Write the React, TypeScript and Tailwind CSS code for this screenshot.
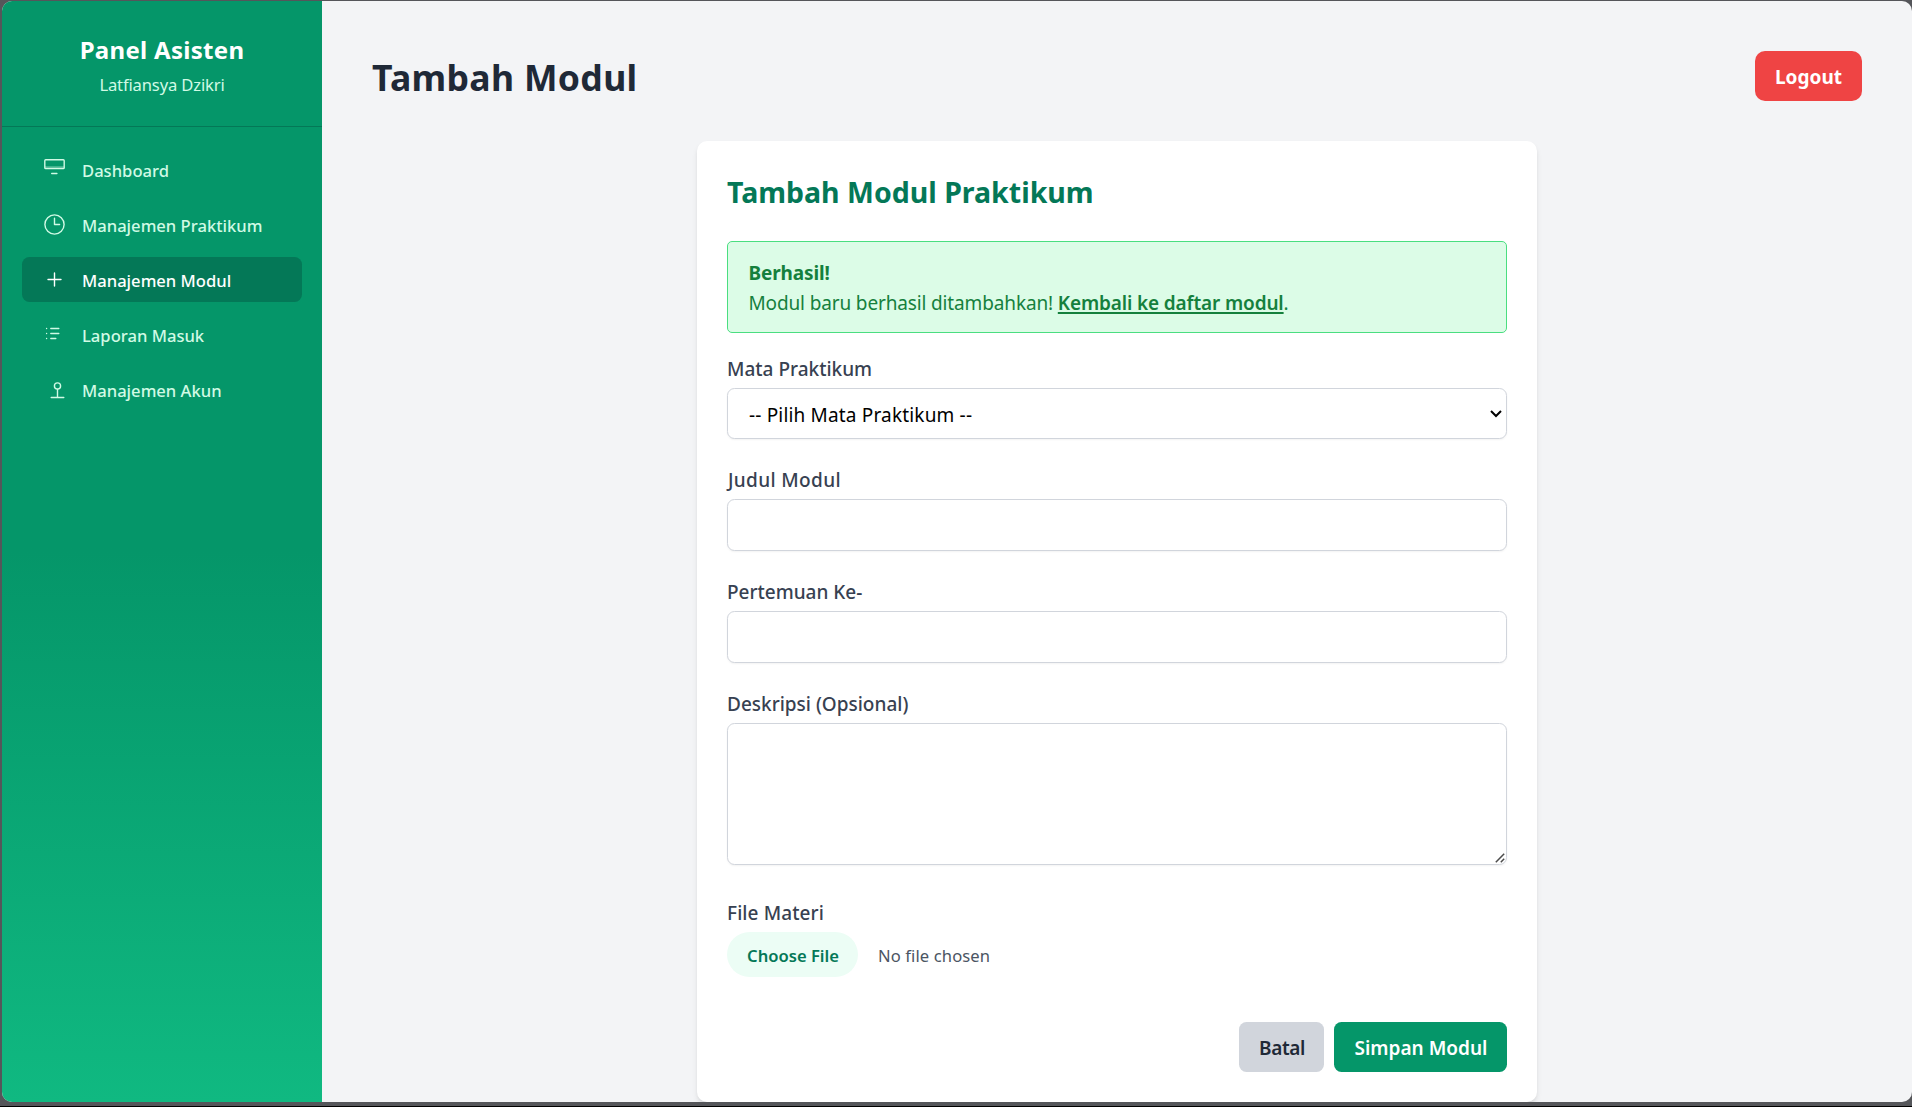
import React from "react";

type NavItem = { label: string; icon: React.ReactNode; active?: boolean };

const Icon = ({ children }: { children: React.ReactNode }) => (
  <svg
    viewBox="0 0 25 25"
    className="mr-[15px] size-[25px] shrink-0"
    fill="none"
    stroke="currentColor"
    strokeWidth={1.4}
    strokeLinecap="round"
    strokeLinejoin="round"
  >
    {children}
  </svg>
);

const nav: NavItem[] = [
  {
    label: "Dashboard",
    icon: (
      <Icon>
        <rect x="2.8" y="2.8" width="19.4" height="8.8" rx="0.9" />
        <path d="M3.2 10.1h18.6" strokeOpacity={0.6} />
        <path d="M9.7 16.5h5.2" />
      </Icon>
    ),
  },
  {
    label: "Manajemen Praktikum",
    icon: (
      <Icon>
        <circle cx="12.5" cy="12.5" r="9.6" />
        <path d="M12.5 6.2v6.3h5.1" />
      </Icon>
    ),
  },
  {
    label: "Manajemen Modul",
    active: true,
    icon: (
      <Icon>
        <path d="M12.5 6v13M6 12.5h13" />
      </Icon>
    ),
  },
  {
    label: "Laporan Masuk",
    icon: (
      <Icon>
        <path d="M8.8 6.5h8M8.8 11.5h8M8.8 16.5h5M4.6 6.5h.01M4.6 11.5h.01M4.6 16.5h.01" />
      </Icon>
    ),
  },
  {
    label: "Manajemen Akun",
    icon: (
      <Icon>
        <circle cx="15.5" cy="9" r="3.1" />
        <path d="M15.5 12.1v8.3M9.2 20.5h12.6" />
      </Icon>
    ),
  },
];

const fieldClass =
  "block w-full rounded-[7.5px] border border-gray-300 bg-white px-5 text-[19px] leading-[30px] text-black shadow-xs outline-none";

const Label = ({ htmlFor, className = "", children }: { htmlFor: string; className?: string; children: string }) => (
  <label
    htmlFor={htmlFor}
    className={`mb-[5px] block pt-0.5 text-[19px] leading-[28px] font-medium text-[#374151] ${className}`}
  >
    {children}
  </label>
);

function Sidebar() {
  return (
    <aside className="flex w-80 shrink-0 flex-col bg-linear-to-b from-[#059669] via-[#059669] to-[#10b981] text-white">
      <div className="border-b border-[#047857] p-[30px] text-center">
        <h3 className="pt-0.5 text-[24px] leading-[33px] font-bold tracking-[0.3px]">Panel Asisten</h3>
        <p className="mt-[5px] pt-0.5 text-[16.6px] leading-[23px] tracking-[-0.15px] text-[#d1fae5]">
          Latfiansya Dzikri
        </p>
      </div>
      <nav className="p-5">
        <ul className="flex flex-col gap-2.5">
          {nav.map((item) => (
            <li key={item.label}>
              <a
                href="#"
                className={`flex items-center rounded-[7.5px] px-5 py-2.5 text-[16.6px] font-medium ${
                  item.active ? "bg-[#047857] text-white" : "text-[#d1fae5]"
                }`}
              >
                {item.icon}
                <span className="pt-0.5 leading-[23px]">{item.label}</span>
              </a>
            </li>
          ))}
        </ul>
      </nav>
    </aside>
  );
}

function ModuleForm() {
  return (
    <section className="mx-auto w-[840px] rounded-[10px] bg-white p-[30px] shadow-md">
      <h2 className="mb-[30px] pt-0.5 text-[28.5px] leading-[38px] font-bold text-[#047857]">Tambah Modul Praktikum</h2>

      <div className="mb-5 rounded-[5px] border border-[#4ade80] bg-[#dcfce7] pt-4 pr-5 pb-3.5 pl-[20.5px] text-[19px] leading-[30px] text-[#15803d]">
        <p className="font-bold tracking-[-0.12px]">Berhasil!</p>
        <p className="tracking-[-0.14px]">
          Modul baru berhasil ditambahkan!{" "}
          <a href="#" className="font-semibold underline decoration-2 underline-offset-2">
            Kembali ke daftar modul
          </a>
          .
        </p>
      </div>

      <form onSubmit={(e) => e.preventDefault()}>
        <div className="mb-[25px]">
          <Label htmlFor="praktikum">Mata Praktikum</Label>
          <div className="relative">
            <select
              id="praktikum"
              className={`${fieldClass} h-[51px] appearance-none pt-0.5 pl-[21px] tracking-[0.17px]`}
            >
              <option>-- Pilih Mata Praktikum --</option>
            </select>
            <svg
              viewBox="0 0 12 8"
              className="pointer-events-none absolute top-[22px] right-[5px] h-2 w-3"
              fill="none"
              stroke="#000"
              strokeWidth={2}
            >
              <path d="M1 1l5 5 5-5" />
            </svg>
          </div>
        </div>

        <div className="mb-[25px]">
          <Label htmlFor="judul" className="pl-px tracking-[0.35px]">
            Judul Modul
          </Label>
          <input id="judul" type="text" className={`${fieldClass} h-[52px]`} />
        </div>

        <div className="mb-[25px]">
          <Label htmlFor="pertemuan">Pertemuan Ke-</Label>
          <input id="pertemuan" type="text" className={`${fieldClass} h-[52px]`} />
        </div>

        <div className="mb-8">
          <Label htmlFor="deskripsi">Deskripsi (Opsional)</Label>
          <div className="relative">
            <textarea id="deskripsi" className={`${fieldClass} h-[142px] resize-none py-2.5`} />
            <svg
              viewBox="0 0 10 10"
              className="pointer-events-none absolute right-0.5 bottom-0.5 size-2.5"
              fill="none"
              stroke="#4b4b4b"
              strokeWidth={1.5}
            >
              <path d="M.8 9.2l8.4-8.4M5.8 9.2l3.4-3.4" />
            </svg>
          </div>
        </div>

        <div className="mb-[45px]">
          <Label htmlFor="materi" className="tracking-[0.1px]">
            File Materi
          </Label>
          <div className="flex items-center gap-5">
            <button
              id="materi"
              type="button"
              className="h-[45px] w-[131px] rounded-full bg-[#ecfdf5] pt-0.5 pl-px text-[16.6px] leading-[25px] font-semibold text-[#047857]"
            >
              Choose File
            </button>
            <span className="pt-0.5 text-[16.6px] leading-[25px] tracking-[0.1px] text-[#4b5563]">No file chosen</span>
          </div>
        </div>

        <div className="flex justify-end gap-2.5">
          <button
            type="button"
            className="h-[50px] w-[85px] rounded-[7.5px] bg-gray-300 pt-0.5 pl-px text-[19px] leading-[30px] font-semibold tracking-[-0.4px] text-[#1f2937]"
          >
            Batal
          </button>
          <button
            type="submit"
            className="h-[50px] w-[173px] rounded-[7.5px] bg-[#059669] pt-0.5 pl-px text-[19px] leading-[30px] font-semibold text-white"
          >
            Simpan Modul
          </button>
        </div>
      </form>
    </section>
  );
}

export default function App() {
  return (
    <div className="h-[1107px] w-[1912px] overflow-hidden border-b border-black bg-[#55565a] pt-px pb-1 pl-0.5 font-['Noto_Sans','Open_Sans',sans-serif]">
      <div className="flex h-[1101px] overflow-hidden rounded-[10px] bg-gray-100">
        <Sidebar />
        <main className="min-w-0 flex-1 px-[50px] pt-[50px]">
          <header className="mb-10 flex h-[50px] items-center justify-between">
            <h1 className="pt-[3px] text-[35.6px] leading-[45px] font-bold tracking-[0.3px] text-[#1f2937]">
              Tambah Modul
            </h1>
            <a
              href="#"
              className="flex h-[50px] w-[107px] items-center justify-center rounded-[10px] bg-[#ef4444] pt-0.5 text-[19px] leading-[30px] font-bold text-white"
            >
              Logout
            </a>
          </header>
          <ModuleForm />
        </main>
      </div>
    </div>
  );
}
